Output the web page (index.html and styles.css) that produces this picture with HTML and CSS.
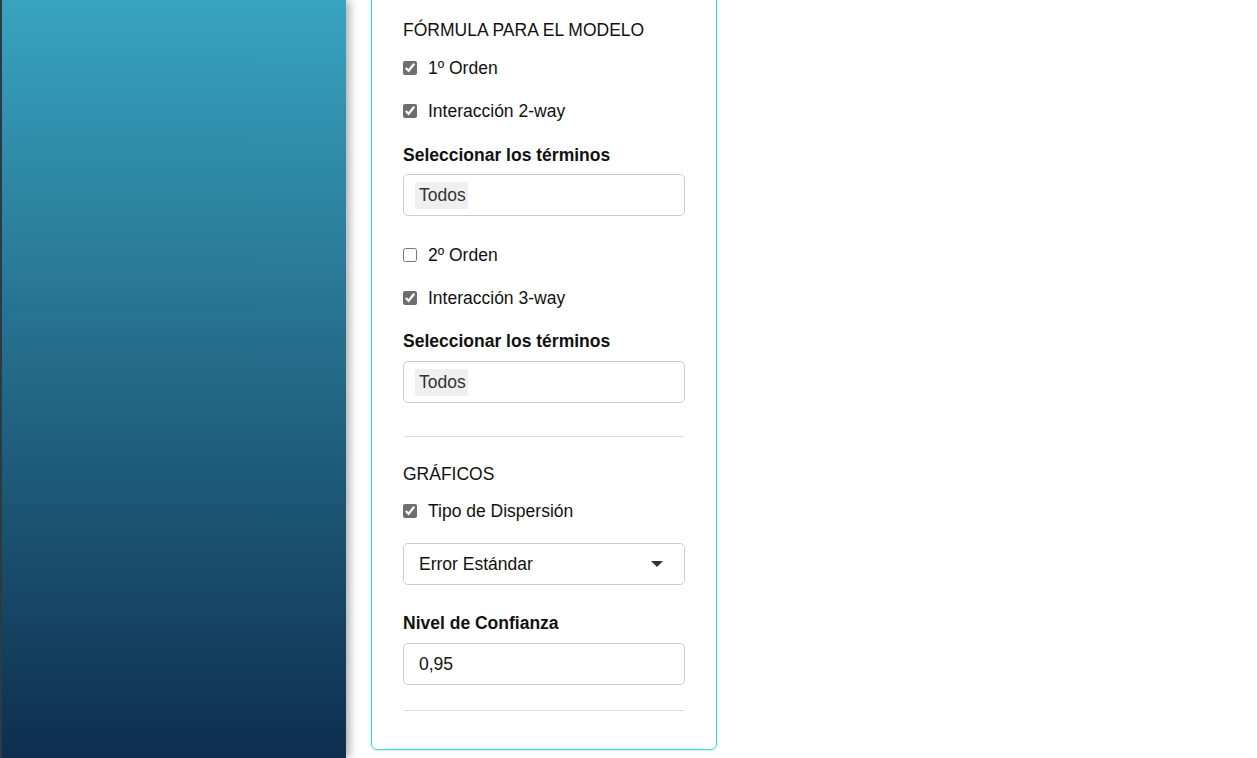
FILE: index.html
```html
<!DOCTYPE html>
<html lang="es">
<head>
    <meta charset="UTF-8">
    <meta name="viewport" content="width=device-width, initial-scale=1.0">
    <title>Opciones del modelo</title>
    <link rel="stylesheet" href="styles.css">
</head>
<body>
    <div class="layout">
        <aside class="sidebar"></aside>
        <main class="main">
            <div class="card">
                <h3 class="section-title">FÓRMULA PARA EL MODELO</h3>
                <label class="check first"><input type="checkbox" checked> 1º Orden</label>
                <label class="check"><input type="checkbox" checked> Interacción 2-way</label>
                <div class="field-label">Seleccionar los términos</div>
                <div class="field tags"><span class="chip">Todos</span></div>

                <label class="check spaced"><input type="checkbox"> 2º Orden</label>
                <label class="check"><input type="checkbox" checked> Interacción 3-way</label>
                <div class="field-label tight">Seleccionar los términos</div>
                <div class="field tags next"><span class="chip">Todos</span></div>

                <hr class="divider">

                <h3 class="section-title after-hr">GRÁFICOS</h3>
                <label class="check first small"><input type="checkbox" checked> Tipo de Dispersión</label>
                <div class="field select">
                    <span>Error Estándar</span>
                    <span class="caret"></span>
                </div>
                <div class="field-label wide">Nivel de Confianza</div>
                <div class="field text next">0,95</div>

                <hr class="divider last">
            </div>
        </main>
    </div>
</body>
</html>
```

FILE: styles.css
```css
body {
    margin: 0;
    font-family: "Liberation Sans", Arial, sans-serif;
    font-size: 17.5px;
    color: #111;
    background-color: #fff;
    overflow: hidden;
}

.layout {
    display: flex;
    height: 100vh;
}

.sidebar {
    width: 344px;
    flex-shrink: 0;
    border-left: 2px solid #2c3b41;
    background: linear-gradient(to bottom, #38a4c0, #0e2e4f);
    box-shadow: 3px 0 9px rgba(0, 0, 0, 0.35);
    z-index: 1;
}

.main {
    padding-left: 25px;
}

.card {
    width: 282px;
    margin-top: -20px;
    padding: 37px 31px 38px 31px;
    border: 1px solid #22e8d0;
    border-radius: 6px;
    box-shadow: 0 1px 2px rgba(0, 0, 0, 0.1);
}

.section-title {
    margin: 0;
    font-size: 17.5px;
    font-weight: normal;
    line-height: 24px;
}

.section-title.after-hr {
    margin-top: 25px;
}

.check {
    display: flex;
    align-items: center;
    height: 24px;
    margin-top: 19px;
    line-height: 24px;
}

.check.first {
    margin-top: 14px;
}

.check.first.small {
    margin-top: 13px;
}

.check.spaced {
    margin-top: 27px;
}

.check input {
    width: 14px;
    height: 14px;
    margin: 0 11px 0 0;
    accent-color: #6e6e6e;
}

.field-label {
    margin-top: 20px;
    font-weight: bold;
    line-height: 24px;
}

.field-label.tight {
    margin-top: 19px;
}

.field-label.wide {
    margin-top: 26px;
}

.field {
    box-sizing: border-box;
    height: 42px;
    margin-top: 7px;
    border: 1px solid #ccc;
    border-radius: 5px;
    display: flex;
    align-items: center;
}

.field.next {
    margin-top: 8px;
}

.tags {
    padding-left: 11px;
}

.chip {
    background-color: #efefef;
    color: #333;
    padding: 4px 2px 4px 4px;
    line-height: 19px;
    border-radius: 2px;
}

.select {
    margin-top: 20px;
    padding: 0 21px 0 15px;
    justify-content: space-between;
}

.caret {
    width: 0;
    height: 0;
    border-left: 6px solid transparent;
    border-right: 6px solid transparent;
    border-top: 6px solid #333;
}

.text {
    padding-left: 15px;
}

.divider {
    margin: 33px 0 0 0;
    border: none;
    border-top: 1px solid #ddd;
}

.divider.last {
    margin-top: 25px;
}
```
